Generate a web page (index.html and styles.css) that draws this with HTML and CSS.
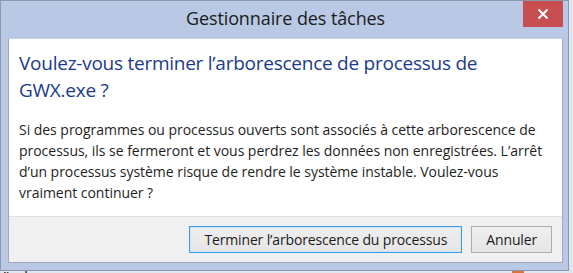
FILE: index.html
```html
<!DOCTYPE html>
<html lang="fr">
<head>
<meta charset="utf-8">
<title>Gestionnaire des tâches</title>
<link rel="stylesheet" href="styles.css">
</head>
<body>
<div class="desk">
  <div class="behind">Windows</div>
  <div class="taskbit"></div>
  <div class="window">
    <div class="titlebar">
      <div class="title">Gestionnaire des tâches</div>
      <div class="close" aria-label="Fermer">
        <svg width="12" height="12" viewBox="0 0 12 12"><path d="M1.5 1.5 L10.5 10.5 M10.5 1.5 L1.5 10.5" stroke="#fff" stroke-width="2" fill="none"/></svg>
      </div>
    </div>
    <div class="client">
      <div class="content">
        <h1 class="instruction">Voulez-vous terminer l’arborescence de processus de GWX.exe ?</h1>
        <p class="message">Si des programmes ou processus ouverts sont associés à cette arborescence de processus, ils se fermeront et vous perdrez les données non enregistrées. L’arrêt d’un processus système risque de rendre le système instable. Voulez-vous vraiment continuer ?</p>
      </div>
      <div class="footer">
        <button class="btn btn-default">Terminer l’arborescence du processus</button>
        <button class="btn">Annuler</button>
      </div>
    </div>
  </div>
</div>
</body>
</html>
```
FILE: styles.css
```css
html, body {
  margin: 0;
  padding: 0;
  background: #dfe6f0;
}
.desk {
  position: relative;
  width: 573px;
  height: 273px;
  overflow: hidden;
  font-family: "Open Sans", "Noto Sans", sans-serif;
}
.behind {
  position: absolute;
  left: -8px;
  top: 266px;
  font-size: 15px;
  color: #111;
}
.taskbit {
  position: absolute;
  left: 512px;
  top: 270px;
  width: 12px;
  height: 3px;
  background: #e0703a;
}
.window {
  position: relative;
  width: 569px;
  height: 271px;
  box-sizing: border-box;
  background: #b9c9e5;
  border: 1px solid #8a97ad;
  display: flex;
  flex-direction: column;
  padding: 0 5px 7px 7px;
}
.titlebar {
  height: 37px;
  display: flex;
  align-items: flex-start;
  justify-content: center;
  position: relative;
}
.title {
  font-size: 18px;
  color: #1b1b1b;
  margin-top: 5px;
  letter-spacing: -0.1px;
}
.close {
  position: absolute;
  right: 0;
  top: 0;
  width: 40px;
  height: 26px;
  background: #c84f4f;
  display: flex;
  align-items: center;
  justify-content: center;
}
.client {
  flex: 1;
  display: flex;
  flex-direction: column;
  background: #fff;
  border: 1px solid #9fa9ba;
  border-top-color: #c6d0e2;
}
.content {
  flex: 1;
  padding: 11px 16px 0 10px;
}
.instruction {
  margin: 0;
  font-weight: normal;
  font-size: 19px;
  line-height: 27px;
  color: #1c3a8c;
  letter-spacing: -0.25px;
}
.message {
  margin: 15px 0 0 0;
  font-size: 14px;
  line-height: 21px;
  color: #1e1e1e;
  letter-spacing: -0.03px;
}
.footer {
  height: 45px;
  background: #f0f0f0;
  border-top: 1px solid #dfdfdf;
  display: flex;
  justify-content: flex-end;
  align-items: center;
  gap: 9px;
  padding-right: 10px;
}
.btn {
  font-family: inherit;
  font-size: 14px;
  color: #1b1b1b;
  height: 27px;
  padding: 0 14px;
  background: linear-gradient(#efefef, #e5e5e5);
  border: 1px solid #adadad;
  border-radius: 0;
  letter-spacing: -0.15px;
}
.btn-default {
  border-color: #3c9ae0;
  box-shadow: inset 0 0 0 1px #cfe6f8;
}
```
